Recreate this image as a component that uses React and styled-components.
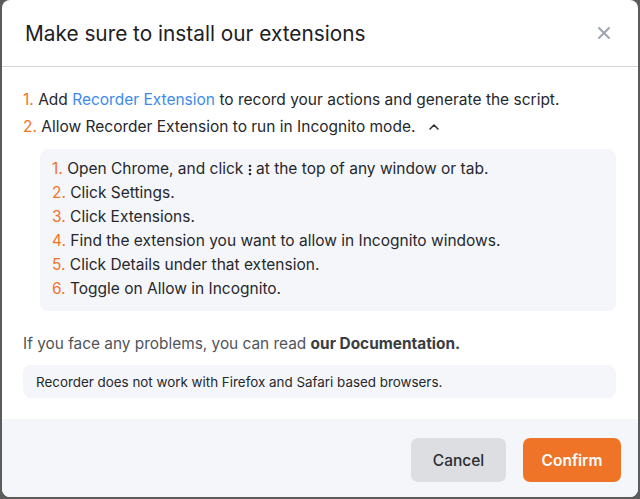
import React from "react";
import styled, { createGlobalStyle } from "styled-components";

const Global = createGlobalStyle`
  html, body { margin: 0; padding: 0; }
  body { font-family: Inter, "Noto Sans", sans-serif; background: #5b5b5b; }
  * { box-sizing: border-box; }
`;

const Backdrop = styled.div`
  height: 499px;
  background: #5b5b5b;
  padding: 0 2px 2px 2px;
  display: flex;
  flex-direction: column;
`;

const Modal = styled.div`
  flex: 1;
  background: #fff;
  border-radius: 8px;
  overflow: hidden;
  display: flex;
  flex-direction: column;
`;

const Header = styled.div`
  height: 67px;
  border-bottom: 1px solid #d3d5da;
  display: flex;
  align-items: center;
  justify-content: space-between;
  padding: 0 26px 0 23px;
`;

const Title = styled.h2`
  margin: 0;
  font-size: 20.8px;
  font-weight: 400;
  color: #1d2024;
`;

const CloseBtn = styled.button`
  border: 0;
  background: none;
  padding: 0;
  width: 16px;
  height: 16px;
  display: flex;
  align-items: center;
  justify-content: center;
  cursor: pointer;
`;

const Body = styled.div`
  flex: 1;
  padding: 21px 22px 0 21px;
  color: #25282c;
`;

const StepList = styled.ol`
  list-style: none;
  margin: 0;
  padding: 0;
  display: flex;
  flex-direction: column;
  gap: ${(p) => p.$gap || 0}px;
`;

const Step = styled.li`
  font-size: 15.5px;
  line-height: 24px;
  color: #25282c;
  display: flex;
  align-items: center;
  white-space: pre;
`;

const Num = styled.span`
  color: #f07427;
`;

const Link = styled.a`
  color: #3d8bea;
  text-decoration: none;
`;

const Kebab = styled.svg`
  display: inline-block;
  flex: none;
  margin-top: 1px;
`;

const Chevron = styled.span`
  display: inline-flex;
  margin-left: 13px;
`;

const InnerBox = styled.div`
  margin: 10px 0 0 17px;
  background: #f5f6fa;
  border-radius: 8px;
  padding: 8px 12px 10px 12px;
`;

const Help = styled.p`
  margin: 21px 0 0 0;
  font-size: 15.4px;
  line-height: 24px;
  color: #50545a;
  b { color: #3a3d42; font-weight: 700; }
`;

const Note = styled.div`
  margin-top: 9px;
  background: #f5f6fa;
  border-radius: 8px;
  height: 33px;
  display: flex;
  align-items: center;
  padding: 0 13px;
  font-size: 13.4px;
  color: #25282c;
`;

const Footer = styled.div`
  background: #f5f6fa;
  height: 78px;
  display: flex;
  justify-content: flex-end;
  align-items: flex-start;
  gap: 17px;
  padding: 19px 17px 0 0;
`;

const Button = styled.button`
  height: 44px;
  width: ${(p) => p.$w}px;
  border: 0;
  border-radius: 7px;
  font-family: Inter, "Noto Sans", sans-serif;
  font-size: 15.5px;
  font-weight: ${(p) => (p.$primary ? 600 : 500)};
  background: ${(p) => (p.$primary ? "#f07427" : "#dcdee2")};
  color: ${(p) => (p.$primary ? "#ffffff" : "#2a2d31")};
  cursor: pointer;
`;

const KebabIcon = () => (
  <Kebab width="4" height="12" viewBox="0 0 4 12" aria-label="menu">
    <circle cx="2" cy="2" r="1.3" fill="#25282c" />
    <circle cx="2" cy="6" r="1.3" fill="#25282c" />
    <circle cx="2" cy="10" r="1.3" fill="#25282c" />
  </Kebab>
);

const steps = [
  <>Open Chrome, and click <KebabIcon /> at the top of any window or tab.</>,
  "Click Settings.",
  "Click Extensions.",
  "Find the extension you want to allow in Incognito windows.",
  "Click Details under that extension.",
  "Toggle on Allow in Incognito.",
];

export default function App() {
  return (
    <>
      <Global />
      <Backdrop>
        <Modal>
          <Header>
            <Title>Make sure to install our extensions</Title>
            <CloseBtn aria-label="Close">
              <svg width="14" height="14" viewBox="0 0 14 14">
                <path d="M2 2 L12 12 M12 2 L2 12" stroke="#9ea5b0" strokeWidth="2" strokeLinecap="round" />
              </svg>
            </CloseBtn>
          </Header>
          <Body>
            <StepList $gap={3}>
              <Step>
                <Num>1. </Num>Add <Link href="#">Recorder Extension</Link> to record your actions and generate the script.
              </Step>
              <Step>
                <Num>2. </Num>Allow Recorder Extension to run in Incognito mode.
                <Chevron>
                  <svg width="12" height="8" viewBox="0 0 12 8">
                    <path d="M2 6 L6 2 L10 6" fill="none" stroke="#2a2d31" strokeWidth="1.5" strokeLinecap="round" strokeLinejoin="round" />
                  </svg>
                </Chevron>
              </Step>
            </StepList>
            <InnerBox>
              <StepList>
                {steps.map((s, i) => (
                  <Step key={i}>
                    <Num>{i + 1}. </Num>
                    {s}
                  </Step>
                ))}
              </StepList>
            </InnerBox>
            <Help>
              If you face any problems, you can read <b>our Documentation.</b>
            </Help>
            <Note>Recorder does not work with Firefox and Safari based browsers.</Note>
          </Body>
          <Footer>
            <Button $w={95}>Cancel</Button>
            <Button $w={98} $primary>Confirm</Button>
          </Footer>
        </Modal>
      </Backdrop>
    </>
  );
}
